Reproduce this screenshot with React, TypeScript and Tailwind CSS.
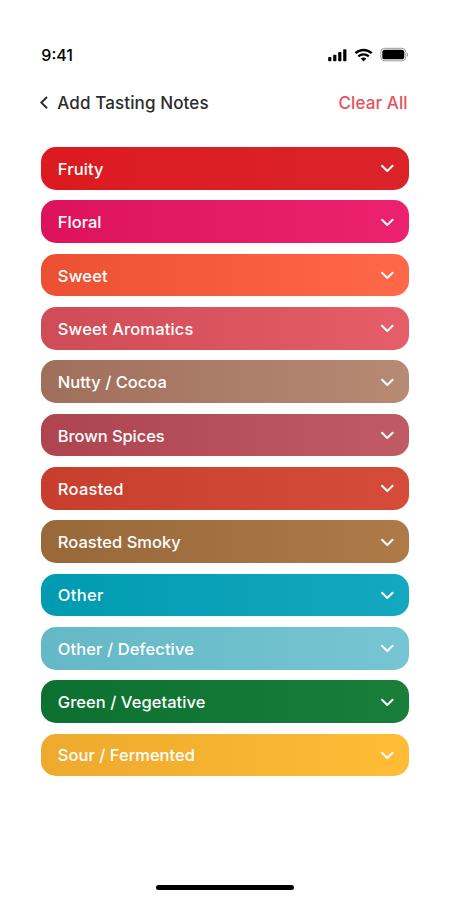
const notes = [
  { label: 'Fruity', bar: 'from-[#dc1a20] to-[#dc232a]', text: 'tracking-[0.1px]' },
  { label: 'Floral', bar: 'from-[#dc125c] to-[#ed226f]', text: 'tracking-[0px]' },
  { label: 'Sweet', bar: 'from-[#eb5032] to-[#ff6848]', text: 'tracking-[0.2px]' },
  { label: 'Sweet Aromatics', bar: 'from-[#cf4b55] to-[#e55e68]', text: 'tracking-[0.15px]' },
  { label: 'Nutty / Cocoa', bar: 'from-[#a06f5c] to-[#b78a74]', text: 'tracking-[0px]' },
  { label: 'Brown Spices', bar: 'from-[#ad444f] to-[#c05b66]', text: 'tracking-[-0.08px]' },
  { label: 'Roasted', bar: 'from-[#c73f2c] to-[#d54c3a]', text: 'tracking-[0.25px]' },
  { label: 'Roasted Smoky', bar: 'from-[#996839] to-[#ad7a48]', text: 'tracking-[0.03px]' },
  { label: 'Other', bar: 'from-[#009bb0] to-[#13a8bf]', text: 'tracking-[0.35px]' },
  { label: 'Other / Defective', bar: 'from-[#65b8c6] to-[#76c5d2]', text: 'tracking-[0.1px]' },
  { label: 'Green / Vegetative', bar: 'from-[#0c7030] to-[#187e3a]', text: 'tracking-[0.05px]' },
  { label: 'Sour / Fermented', bar: 'from-[#edaa2c] to-[#ffbc36]', text: 'tracking-[0.02px]' },
];

function StatusIcons() {
  return (
    <svg width="81" height="16" viewBox="0 0 81 16" className="block">
      <rect x="0.2" y="10" width="3.2" height="4.2" rx="0.8" />
      <rect x="5.2" y="7.8" width="3.2" height="6.4" rx="0.8" />
      <rect x="10.2" y="5" width="3.2" height="9.2" rx="0.8" />
      <rect x="15.2" y="2.2" width="3.2" height="12" rx="0.8" />
      <g fill="none" stroke="#000" strokeWidth="2.3">
        <path d="M27.4 6.2c4.7-4.3 11.6-4.3 16.3 0" />
        <path d="M30.3 9.4c3-2.7 7.5-2.7 10.5 0" />
      </g>
      <path d="M32.7 11.5c1.7-1.4 4-1.4 5.7 0l-2.85 2.9z" />
      <rect x="52.8" y="1.3" width="25" height="12.5" rx="4" fill="none" stroke="#999" />
      <rect x="54.3" y="2.8" width="22" height="9.5" rx="2.6" />
      <path d="M79 5.7v4.2c1.5-.6 1.5-3.6 0-4.2z" fill="#999" />
    </svg>
  );
}

export default function App() {
  return (
    <main className="flex h-[916px] w-[450px] flex-col bg-white pl-[41.3px] pr-[41.3px] font-['Inter','Liberation_Sans',sans-serif]">
      <header className="mt-[43px] flex h-6 items-center justify-between text-[16px] font-medium text-black">
        <span>9:41</span>
        <StatusIcons />
      </header>
      <div className="mt-[25px] flex h-6 items-center justify-between text-[17px] text-[#2c2c2c]">
        <button className="flex items-center">
          <svg width="16" height="16" viewBox="0 0 16 16" fill="none" stroke="#2c2c2c" strokeWidth="2" className="-mt-0.5 block overflow-visible">
            <path d="M6 2 0.4 7.6l5.6 5.6" />
          </svg>
          <span className="font-[450] tracking-[0.12px]">Add Tasting Notes</span>
        </button>
        <button className="pr-px font-[450] tracking-[0.1px] text-[#e4525d]">Clear All</button>
      </div>
      <ul className="mt-[31.1px] flex flex-col gap-[10.66px]">
        {notes.map((n) => (
          <li key={n.label} className={`flex h-[42.67px] items-center justify-between rounded-[15px] bg-linear-to-r pl-[16.5px] pr-[14px] text-[16.5px] font-[550] text-white ${n.bar}`}>
            <span className={`pt-[1.8px] ${n.text}`}>{n.label}</span>
            <svg width="15" height="12" viewBox="0 0 15 12" fill="none" stroke="#fff" strokeWidth="2" strokeLinecap="round" strokeLinejoin="round" className="block">
              <path d="M2 3.8 7.3 9 12.6 3.8" />
            </svg>
          </li>
        ))}
      </ul>
      <div className="mb-[26px] mt-auto h-[5px] w-[138px] self-center rounded-full bg-black" />
    </main>
  );
}
